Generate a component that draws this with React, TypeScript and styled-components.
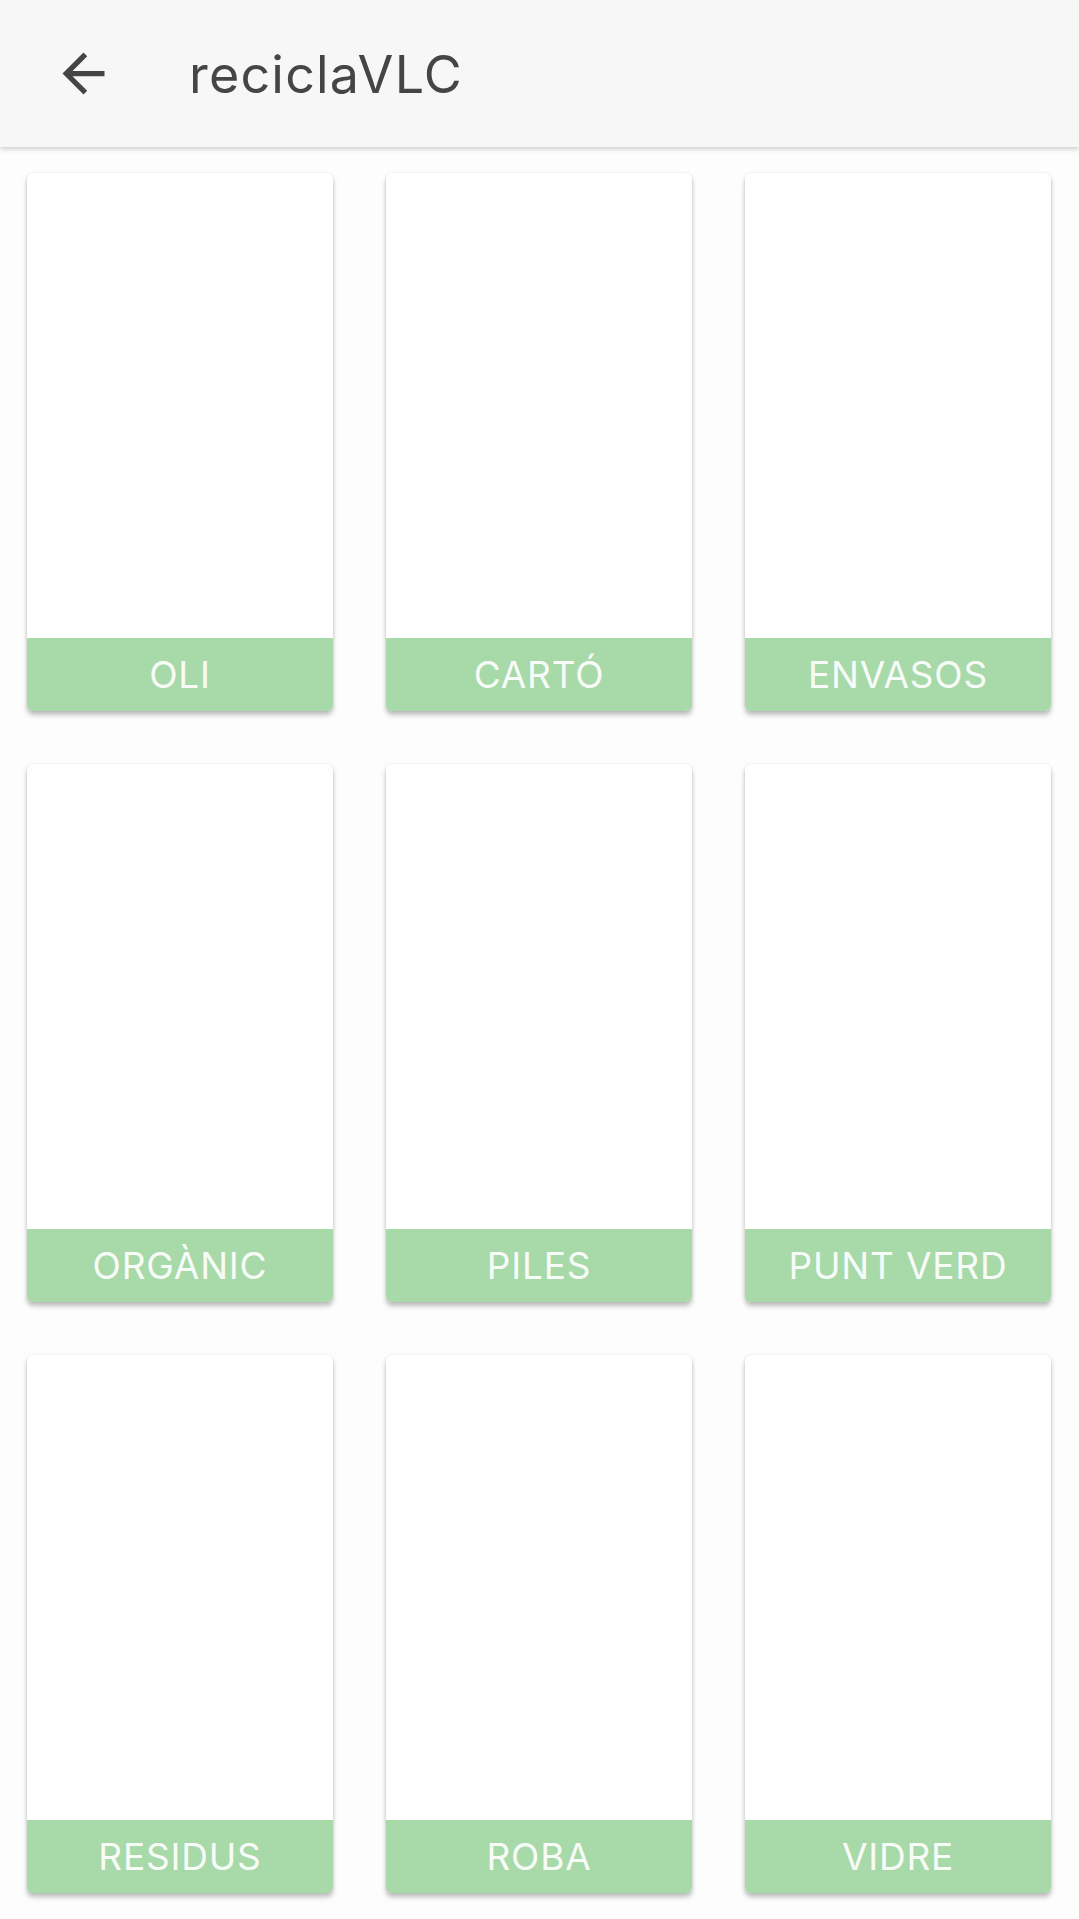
import * as React from 'react';
import styled, { createGlobalStyle } from 'styled-components';

const GlobalStyle = createGlobalStyle`
  html, body {
    margin: 0;
    padding: 0;
    background: #fdfdfd;
    font-family: 'Inter', 'Open Sans', sans-serif;
  }
`;

const Page = styled.div`
  width: 1079px;
  min-height: 1919px;
  background: #fdfdfd;
`;

const Toolbar = styled.header`
  display: flex;
  align-items: center;
  height: 147px;
  padding-left: 52px;
  box-sizing: border-box;
  background: #f7f7f7;
  box-shadow: 0 2px 5px rgba(0, 0, 0, 0.2);
  position: relative;
  z-index: 1;
`;

const BackButton = styled.button`
  display: flex;
  align-items: center;
  justify-content: center;
  width: 63px;
  height: 63px;
  padding: 0;
  border: none;
  background: transparent;
  color: #444444;
`;

const Title = styled.h1`
  margin: 2px 0 0 74px;
  font-family: 'Inter', 'Open Sans', sans-serif;
  font-size: 52px;
  font-weight: 400;
  letter-spacing: 1.2px;
  color: #454545;
`;

const Grid = styled.main`
  display: grid;
  grid-template-columns: repeat(3, 306px);
  grid-auto-rows: 538px;
  column-gap: 53px;
  row-gap: 53px;
  padding: 26px 27px 0 27px;
`;

const Card = styled.div`
  display: flex;
  flex-direction: column;
  justify-content: flex-end;
  background: #ffffff;
  border-radius: 6px;
  overflow: hidden;
  box-shadow: 0 4px 5px rgba(0, 0, 0, 0.25), 0 0 3px rgba(0, 0, 0, 0.08);
`;

const Label = styled.div`
  display: flex;
  align-items: center;
  justify-content: center;
  height: 73px;
  background: #a8d9a9;
  color: #f8fcf8;
  font-family: 'Inter', 'Open Sans', sans-serif;
  font-size: 37px;
  font-weight: 400;
  letter-spacing: 0.8px;
`;

const items = [
  'OLI',
  'CARTÓ',
  'ENVASOS',
  'ORGÀNIC',
  'PILES',
  'PUNT VERD',
  'RESIDUS',
  'ROBA',
  'VIDRE',
];

const ArrowBack = () => (
  <svg width="63" height="63" viewBox="0 0 24 24" fill="currentColor">
    <path d="M20 11H7.83l5.59-5.59L12 4l-8 8 8 8 1.41-1.41L7.83 13H20v-2z" />
  </svg>
);

export default function App() {
  return (
    <Page>
      <GlobalStyle />
      <Toolbar>
        <BackButton aria-label="back">
          <ArrowBack />
        </BackButton>
        <Title>reciclaVLC</Title>
      </Toolbar>
      <Grid>
        {items.map(name => (
          <Card key={name}>
            <Label>{name}</Label>
          </Card>
        ))}
      </Grid>
    </Page>
  );
}
